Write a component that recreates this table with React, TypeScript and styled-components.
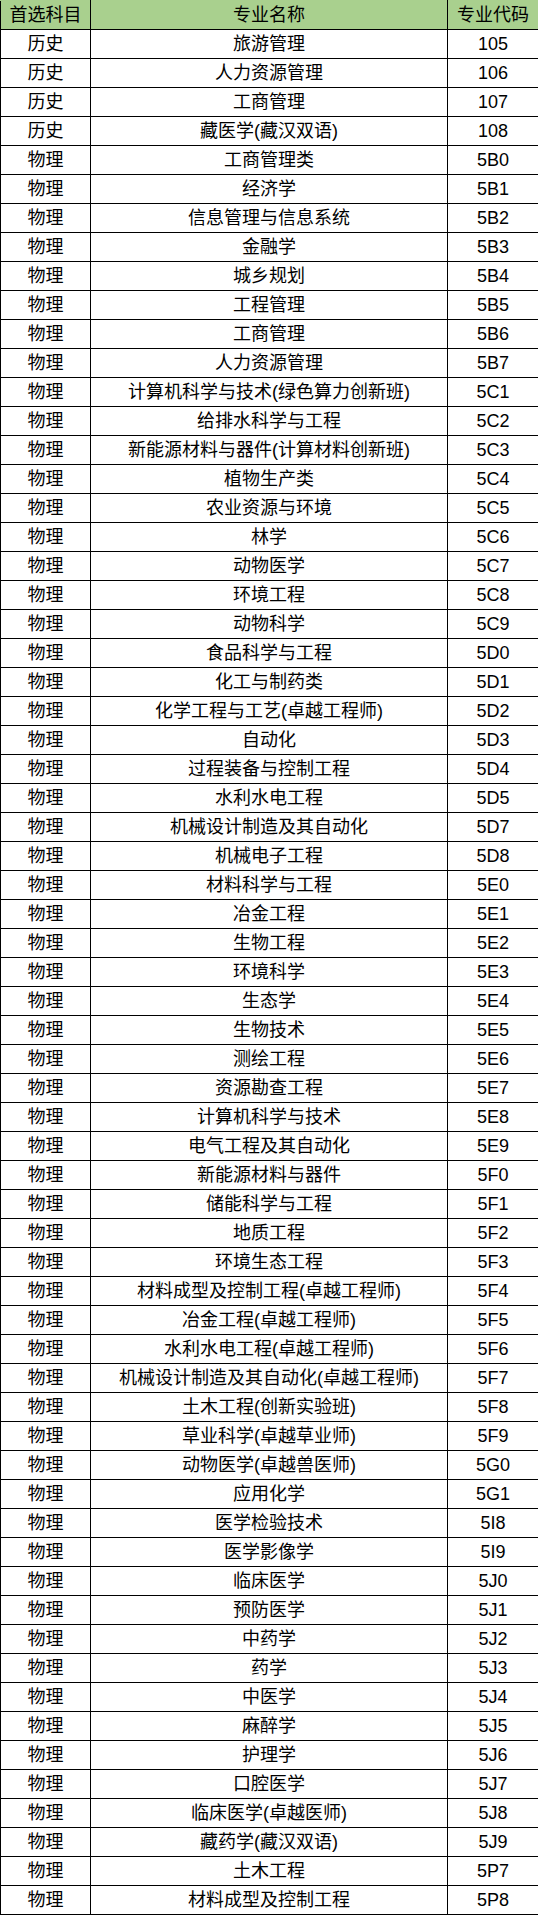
import React from "react";
import styled, { createGlobalStyle } from "styled-components";

const Global = createGlobalStyle`
  html, body { margin: 0; padding: 0; background: #fff; }
  body { font-family: "Liberation Sans", "Noto Sans CJK SC", sans-serif; }
`;

const Table = styled.table`
  width: 538px;
  border-collapse: collapse;
  table-layout: fixed;
  color: #000;
  font-family: "Liberation Sans", "Noto Sans CJK SC", sans-serif;
  font-size: 18px;
`;

const HeadCell = styled.th`
  background: #a9d08e;
  border: 1px solid #000;
  border-top-color: #a9d08e;
  height: 28px;
  padding: 0;
  font-weight: normal;
  text-align: center;
  line-height: 28px;
  white-space: nowrap;
`;

const Cell = styled.td`
  border: 1px solid #000;
  height: 28px;
  padding: 0;
  text-align: center;
  line-height: 28px;
  white-space: nowrap;
`;

const rows: [string, string, string][] = [
  ["历史", "旅游管理", "105"],
  ["历史", "人力资源管理", "106"],
  ["历史", "工商管理", "107"],
  ["历史", "藏医学(藏汉双语)", "108"],
  ["物理", "工商管理类", "5B0"],
  ["物理", "经济学", "5B1"],
  ["物理", "信息管理与信息系统", "5B2"],
  ["物理", "金融学", "5B3"],
  ["物理", "城乡规划", "5B4"],
  ["物理", "工程管理", "5B5"],
  ["物理", "工商管理", "5B6"],
  ["物理", "人力资源管理", "5B7"],
  ["物理", "计算机科学与技术(绿色算力创新班)", "5C1"],
  ["物理", "给排水科学与工程", "5C2"],
  ["物理", "新能源材料与器件(计算材料创新班)", "5C3"],
  ["物理", "植物生产类", "5C4"],
  ["物理", "农业资源与环境", "5C5"],
  ["物理", "林学", "5C6"],
  ["物理", "动物医学", "5C7"],
  ["物理", "环境工程", "5C8"],
  ["物理", "动物科学", "5C9"],
  ["物理", "食品科学与工程", "5D0"],
  ["物理", "化工与制药类", "5D1"],
  ["物理", "化学工程与工艺(卓越工程师)", "5D2"],
  ["物理", "自动化", "5D3"],
  ["物理", "过程装备与控制工程", "5D4"],
  ["物理", "水利水电工程", "5D5"],
  ["物理", "机械设计制造及其自动化", "5D7"],
  ["物理", "机械电子工程", "5D8"],
  ["物理", "材料科学与工程", "5E0"],
  ["物理", "冶金工程", "5E1"],
  ["物理", "生物工程", "5E2"],
  ["物理", "环境科学", "5E3"],
  ["物理", "生态学", "5E4"],
  ["物理", "生物技术", "5E5"],
  ["物理", "测绘工程", "5E6"],
  ["物理", "资源勘查工程", "5E7"],
  ["物理", "计算机科学与技术", "5E8"],
  ["物理", "电气工程及其自动化", "5E9"],
  ["物理", "新能源材料与器件", "5F0"],
  ["物理", "储能科学与工程", "5F1"],
  ["物理", "地质工程", "5F2"],
  ["物理", "环境生态工程", "5F3"],
  ["物理", "材料成型及控制工程(卓越工程师)", "5F4"],
  ["物理", "冶金工程(卓越工程师)", "5F5"],
  ["物理", "水利水电工程(卓越工程师)", "5F6"],
  ["物理", "机械设计制造及其自动化(卓越工程师)", "5F7"],
  ["物理", "土木工程(创新实验班)", "5F8"],
  ["物理", "草业科学(卓越草业师)", "5F9"],
  ["物理", "动物医学(卓越兽医师)", "5G0"],
  ["物理", "应用化学", "5G1"],
  ["物理", "医学检验技术", "5I8"],
  ["物理", "医学影像学", "5I9"],
  ["物理", "临床医学", "5J0"],
  ["物理", "预防医学", "5J1"],
  ["物理", "中药学", "5J2"],
  ["物理", "药学", "5J3"],
  ["物理", "中医学", "5J4"],
  ["物理", "麻醉学", "5J5"],
  ["物理", "护理学", "5J6"],
  ["物理", "口腔医学", "5J7"],
  ["物理", "临床医学(卓越医师)", "5J8"],
  ["物理", "藏药学(藏汉双语)", "5J9"],
  ["物理", "土木工程", "5P7"],
  ["物理", "材料成型及控制工程", "5P8"],
];

export default function App() {
  return (
    <>
      <Global />
      <Table>
        <colgroup>
          <col style={{ width: 90 }} />
          <col style={{ width: 357 }} />
          <col style={{ width: 91 }} />
        </colgroup>
        <thead>
          <tr>
            <HeadCell>首选科目</HeadCell>
            <HeadCell>专业名称</HeadCell>
            <HeadCell>专业代码</HeadCell>
          </tr>
        </thead>
        <tbody>
          {rows.map(([a, b, c]) => (
            <tr key={c}>
              <Cell>{a}</Cell>
              <Cell>{b}</Cell>
              <Cell>{c}</Cell>
            </tr>
          ))}
        </tbody>
      </Table>
    </>
  );
}
